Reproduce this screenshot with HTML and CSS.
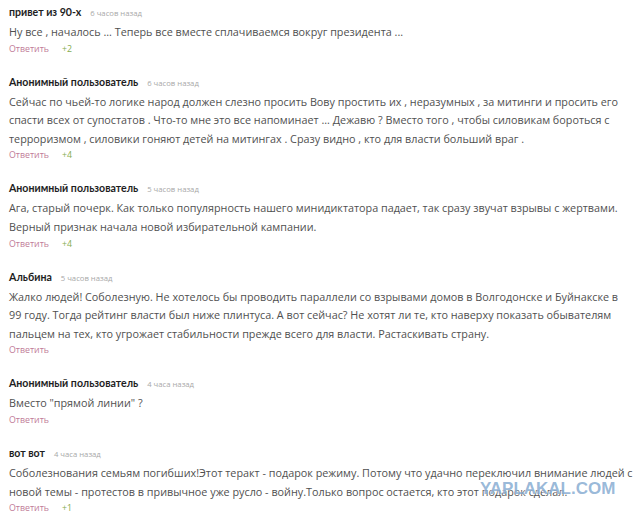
FILE: index.html
```html
<!DOCTYPE html>
<html lang="ru">
<head>
<meta charset="utf-8">
<link rel="stylesheet" href="styles.css">
</head>
<body>
<div class="comments">
  <div class="comment">
    <div class="head"><span class="name">привет из 90-х</span><span class="time">6 часов назад</span></div>
    <p class="text">Ну все , началось ... Теперь все вместе сплачиваемся вокруг президента ...</p>
    <div class="actions"><span class="reply">Ответить</span><span class="rating">+2</span></div>
  </div>
  <div class="comment">
    <div class="head"><span class="name">Анонимный пользователь</span><span class="time">6 часов назад</span></div>
    <p class="text">Сейчас по чьей-то логике народ должен слезно просить Вову простить их , неразумных , за митинги и просить его спасти всех от супостатов . Что-то мне это все напоминает ... Дежавю ? Вместо того , чтобы силовикам бороться с терроризмом , силовики гоняют детей на митингах . Сразу видно , кто для власти больший враг .</p>
    <div class="actions"><span class="reply">Ответить</span><span class="rating">+4</span></div>
  </div>
  <div class="comment">
    <div class="head"><span class="name">Анонимный пользователь</span><span class="time">5 часов назад</span></div>
    <p class="text">Ага, старый почерк. Как только популярность нашего минидиктатора падает, так сразу звучат взрывы с жертвами. Верный признак начала новой избирательной кампании.</p>
    <div class="actions"><span class="reply">Ответить</span><span class="rating">+4</span></div>
  </div>
  <div class="comment">
    <div class="head"><span class="name">Альбина</span><span class="time">5 часов назад</span></div>
    <p class="text">Жалко людей! Соболезную. Не хотелось бы проводить параллели со взрывами домов в Волгодонске и Буйнакске в 99 году. Тогда рейтинг власти был ниже плинтуса. А вот сейчас? Не хотят ли те, кто наверху показать обывателям пальцем на тех, кто угрожает стабильности прежде всего для власти. Растаскивать страну.</p>
    <div class="actions"><span class="reply">Ответить</span></div>
  </div>
  <div class="comment">
    <div class="head"><span class="name">Анонимный пользователь</span><span class="time">4 часа назад</span></div>
    <p class="text">Вместо "прямой линии" ?</p>
    <div class="actions"><span class="reply">Ответить</span></div>
  </div>
  <div class="comment">
    <div class="head"><span class="name">вот вот</span><span class="time">4 часа назад</span></div>
    <p class="text">Соболезнования семьям погибших!Этот теракт - подарок режиму. Потому что удачно переключил внимание людей с новой темы - протестов в привычное уже русло - войну.Только вопрос остается, кто этот подарок сделал.</p>
    <div class="actions"><span class="reply">Ответить</span><span class="rating">+1</span></div>
  </div>
</div>
<div class="watermark">YAPLAKAL.COM</div>
</body>
</html>
```

FILE: styles.css
```css
html, body {
  margin: 0;
  padding: 0;
  background: #ffffff;
}
body {
  font-family: "Open Sans", "Liberation Sans", sans-serif;
  color: #505050;
  position: relative;
  width: 640px;
  height: 520px;
  overflow: hidden;
}
.comments {
  padding: 3px 0 0 9px;
  width: 624px;
  display: flex;
  flex-direction: column;
  gap: 17px;
}
.comment {
  display: flex;
  flex-direction: column;
}
.head {
  display: flex;
  align-items: baseline;
  gap: 9px;
  height: 19px;
  line-height: 19px;
}
.name {
  font-family: Lato, "Open Sans", sans-serif;
  font-weight: 700;
  font-size: 10.6px;
  color: #1e1e1e;
}
.time {
  font-size: 7.7px;
  color: #a8a8a8;
}
.text {
  margin: 1px 0 0;
  font-size: 10.8px;
  line-height: 18.6px;
  color: #505050;
}
.actions {
  display: flex;
  gap: 13px;
  font-size: 8.8px;
  line-height: 14px;
}
.reply {
  color: #bf7b98;
}
.rating {
  color: #86ad4e;
}
.watermark {
  position: absolute;
  left: 480px;
  top: 479px;
  font-family: "Liberation Sans", sans-serif;
  font-weight: 700;
  font-size: 17px;
  color: rgba(95, 145, 195, 0.65);
  text-shadow: 0 0 2px rgba(255, 255, 255, 0.9);
}
```
